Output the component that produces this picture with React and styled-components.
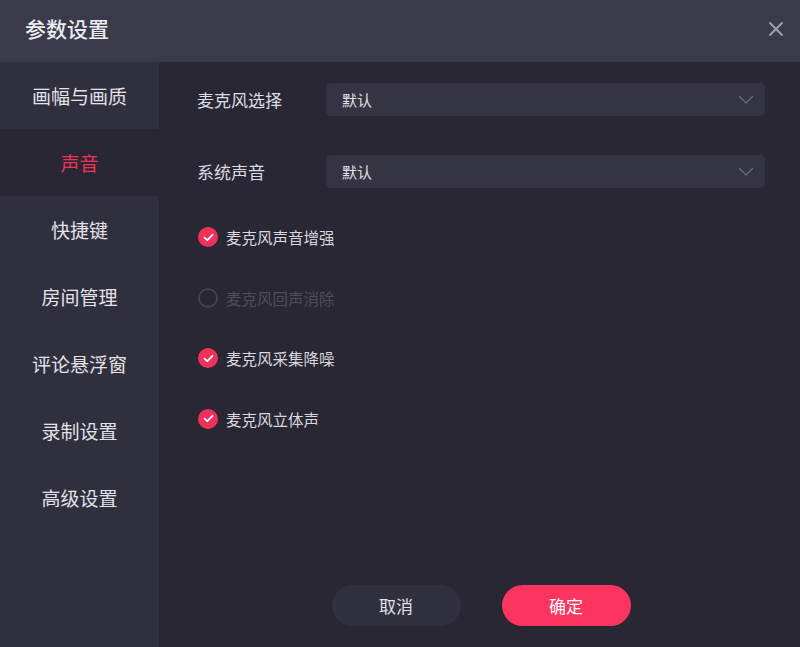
import styled, { createGlobalStyle } from "styled-components";

const GlobalStyle = createGlobalStyle`
  html, body {
    margin: 0;
    padding: 0;
    background: #282733;
  }
  body {
    font-family: "Noto Sans CJK SC", "Noto Sans", sans-serif;
  }
`;

const menu = ["画幅与画质", "声音", "快捷键", "房间管理", "评论悬浮窗", "录制设置", "高级设置"];

const options = [
  { label: "麦克风声音增强", checked: true },
  { label: "麦克风回声消除", checked: false },
  { label: "麦克风采集降噪", checked: true },
  { label: "麦克风立体声", checked: true },
];

const CheckIcon = () => (
  <svg width="11" height="9" viewBox="0 0 11 9">
    <path d="M1.5 4.6 L4.3 7.2 L9.5 1.8" fill="none" stroke="#fff" strokeWidth="1.8" strokeLinecap="round" strokeLinejoin="round" />
  </svg>
);

const Chevron = () => (
  <svg width="16" height="9" viewBox="0 0 16 9">
    <path d="M1 1 L8 8 L15 1" fill="none" stroke="#6b6a78" strokeWidth="1.4" />
  </svg>
);

const App = () => {
  return (
    <Dialog>
      <GlobalStyle />
      <Header>
        <h1>参数设置</h1>
        <Close aria-label="close">
          <svg width="16" height="16" viewBox="0 0 16 16">
            <path d="M2 2 L14 14 M14 2 L2 14" stroke="#a3a3ad" strokeWidth="1.8" strokeLinecap="round" />
          </svg>
        </Close>
      </Header>
      <Body>
        <Sidebar>
          {menu.map((item) => (
            <MenuItem key={item} $active={item === "声音"}>
              {item}
            </MenuItem>
          ))}
        </Sidebar>
        <Content>
          <Fields>
            <FieldRow>
              <Label>麦克风选择</Label>
              <Select>
                <span>默认</span>
                <Chevron />
              </Select>
            </FieldRow>
            <FieldRow>
              <Label>系统声音</Label>
              <Select>
                <span>默认</span>
                <Chevron />
              </Select>
            </FieldRow>
          </Fields>
          <Checks>
            {options.map((opt) => (
              <CheckRow key={opt.label} $disabled={!opt.checked}>
                <Circle $checked={opt.checked}>{opt.checked && <CheckIcon />}</Circle>
                {opt.label}
              </CheckRow>
            ))}
          </Checks>
          <Footer>
            <Button>取消</Button>
            <Button $primary>确定</Button>
          </Footer>
        </Content>
      </Body>
    </Dialog>
  );
};

const Dialog = styled.div`
  width: 800px;
  height: 647px;
  display: flex;
  flex-direction: column;
  background: #282733;
  overflow: hidden;
`;

const Header = styled.div`
  height: 62px;
  flex-shrink: 0;
  display: flex;
  align-items: center;
  justify-content: space-between;
  padding: 0 16px 0 25px;
  background: #393a4a;

  h1 {
    margin: 0 0 6px;
    font-size: 21px;
    font-weight: 500;
    color: #ecebf0;
  }
`;

const Close = styled.div`
  display: flex;
  margin-bottom: 4px;
`;

const Body = styled.div`
  flex: 1;
  display: flex;
`;

const Sidebar = styled.nav`
  width: 159px;
  flex-shrink: 0;
  background: #302f3e;
  display: flex;
  flex-direction: column;
`;

const MenuItem = styled.div`
  height: 67px;
  display: flex;
  align-items: center;
  justify-content: center;
  font-size: 19px;
  color: ${(p) => (p.$active ? "#f0315a" : "#e3e2e8")};
  background: ${(p) => (p.$active ? "#282733" : "transparent")};
`;

const Content = styled.div`
  flex: 1;
  display: flex;
  flex-direction: column;
  padding: 21px 35px 21px 38px;
`;

const Fields = styled.div`
  display: flex;
  flex-direction: column;
  gap: 39px;
`;

const FieldRow = styled.div`
  display: flex;
  align-items: center;
`;

const Label = styled.div`
  width: 129px;
  font-size: 17px;
  color: #dddce3;
`;

const Select = styled.div`
  flex: 1;
  height: 33px;
  border-radius: 5px;
  background: #353442;
  display: flex;
  align-items: center;
  justify-content: space-between;
  padding: 0 11px 0 16px;
  font-size: 15px;
  color: #e3e2e8;
`;

const Checks = styled.div`
  margin-top: 39px;
  padding-left: 1px;
  display: flex;
  flex-direction: column;
  gap: 40.5px;
`;

const CheckRow = styled.div`
  display: flex;
  align-items: center;
  gap: 8px;
  height: 20px;
  font-size: 15.5px;
  color: ${(p) => (p.$disabled ? "#4e4d5a" : "#d9d8df")};
`;

const Circle = styled.span`
  width: 20px;
  height: 20px;
  box-sizing: border-box;
  border-radius: 50%;
  display: flex;
  align-items: center;
  justify-content: center;
  background: ${(p) => (p.$checked ? "#f0315a" : "transparent")};
  border: ${(p) => (p.$checked ? "none" : "2px solid #43424f")};
`;

const Footer = styled.div`
  margin-top: auto;
  display: flex;
  justify-content: center;
  gap: 41px;
`;

const Button = styled.button`
  width: 129px;
  height: 41px;
  border: none;
  border-radius: 21px;
  font-family: inherit;
  font-size: 17px;
  color: ${(p) => (p.$primary ? "#ffffff" : "#e3e2e8")};
  background: ${(p) => (p.$primary ? "#fc3560" : "#30303e")};
`;

export default App;
